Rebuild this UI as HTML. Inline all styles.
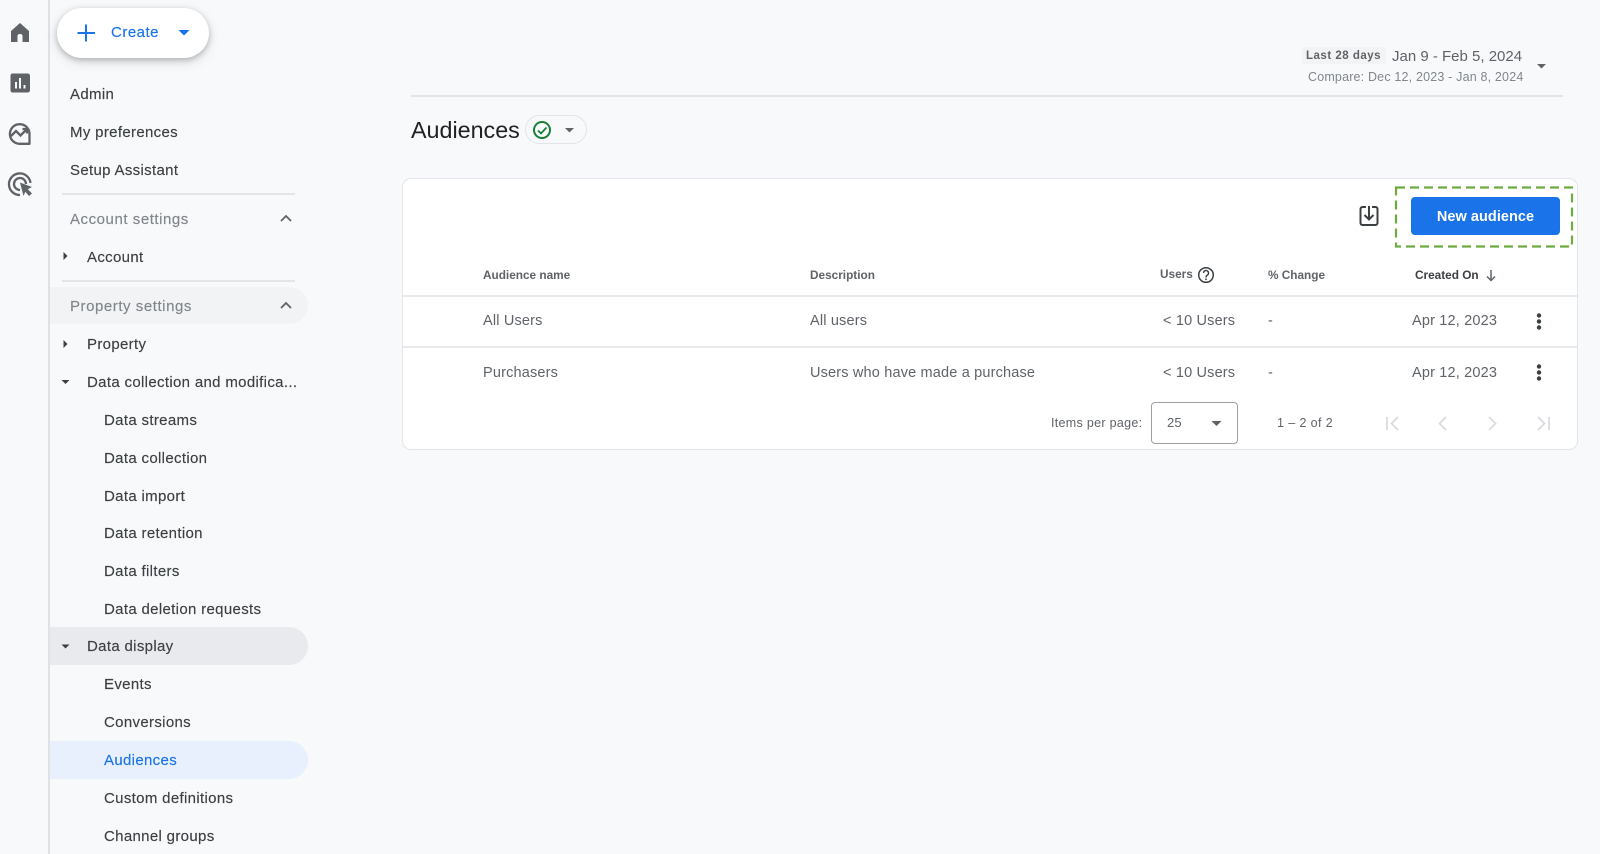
<!DOCTYPE html>
<html><head><meta charset="utf-8"><title>Audiences</title>
<style>
html,body{margin:0;padding:0;width:1600px;height:854px;overflow:hidden;background:#f8f9fb;font-family:"Liberation Sans",sans-serif;color:#3c4043}
.t{position:absolute;white-space:nowrap;line-height:20px;height:20px;font-size:15px;letter-spacing:.33px;-webkit-text-stroke:.15px currentColor}
.b{position:absolute}
svg{position:absolute;overflow:visible}
.g{color:#80868b;letter-spacing:.55px}
.h{font-size:11.800px;font-weight:bold;color:#5f6368;letter-spacing:0;-webkit-text-stroke:0}
.r{font-size:14.500px;color:#5f6368;letter-spacing:.17px;-webkit-text-stroke:0}
</style></head><body>
<div class="b" style="left:48px;top:0;width:2px;height:854px;background:#dfe1e5"></div>

<!-- pills -->
<div class="b" style="left:50px;top:287px;width:258px;height:37px;background:#f1f3f4;border-radius:0 19px 19px 0"></div>
<div class="b" style="left:50px;top:627px;width:258px;height:38px;background:#e8eaed;border-radius:0 19px 19px 0"></div>
<div class="b" style="left:50px;top:741px;width:258px;height:38px;background:#e8f0fe;border-radius:0 19px 19px 0"></div>
<div class="b" style="left:62px;top:193px;width:233px;height:2px;background:#e3e5e8"></div>
<div class="b" style="left:62px;top:280px;width:233px;height:2px;background:#e3e5e8"></div>

<!-- rail icons -->
<svg style="left:0;top:0" width="50" height="210" fill="#5f6368">
<path d="M20 23 L11 31 V42 H17.500 V36 Q17.500 34 20 34 Q22.500 34 22.500 36 V42 H29 V31 Z"/>
<path fill-rule="evenodd" d="M12.500 73.500 H27.500 Q30 73.500 30 76 V90 Q30 92.500 27.500 92.500 H12.500 Q10.500 92.500 10.500 90 V76 Q10.500 73.500 12.500 73.500 Z M15 82 V88.500 H17 V82 Z M19 78 V88.500 H21 V78 Z M23.500 85 V88.500 H25.500 V85 Z"/>
<g fill="none" stroke="#5f6368" stroke-width="2.300">
<path d="M29.500 141.500 V134 A9.800 9.800 0 1 0 19.700 143.800 H29.500 Z" stroke-linejoin="round"/>
<path d="M11 136 L16 131 L20.500 135.500 L26.500 129.500"/>
<path d="M22.500 129 H27 V133.500"/>
</g>
<g fill="none" stroke="#5f6368" stroke-width="2.300">
<path d="M20 195 A10.800 10.800 0 1 1 30.500 183"/>
<path d="M20 190 A6 6 0 1 1 26 184"/>
</g>
<path d="M20 182.500 L32 187 L27.800 189.300 L32 193.500 L29 196 L25.300 191.800 L23.500 196 Z"/>
</svg>

<!-- create button -->
<div class="b" style="left:57px;top:8px;width:152px;height:50px;background:#fff;border-radius:25px;box-shadow:0 2px 6px rgba(60,64,67,.3),0 4px 12px rgba(60,64,67,.15)"></div>
<svg style="left:0;top:0" width="210" height="60">
<path d="M86 24.500 V41.500 M77.500 33 H95" stroke="#1a73e8" stroke-width="2" fill="none"/>
<path d="M178.500 30 H189.500 L184 35.500 Z" fill="#1a73e8"/>
</svg>
<div class="t" style="left:111px;top:23px;color:#1a73e8;font-size:15px;letter-spacing:.5px">Create</div>

<!-- nav -->
<div class="t" style="left:70px;top:84.500px">Admin</div>
<div class="t" style="left:70px;top:122.500px">My preferences</div>
<div class="t" style="left:70px;top:160.500px">Setup Assistant</div>
<div class="t g" style="left:70px;top:209.500px">Account settings</div>
<div class="t" style="left:87px;top:247.500px">Account</div>
<div class="t g" style="left:70px;top:296.500px">Property settings</div>
<div class="t" style="left:87px;top:334.500px">Property</div>
<div class="t" style="left:87px;top:372.500px">Data collection and modifica...</div>
<div class="t" style="left:104px;top:410.500px">Data streams</div>
<div class="t" style="left:104px;top:448.500px">Data collection</div>
<div class="t" style="left:104px;top:486.500px">Data import</div>
<div class="t" style="left:104px;top:523.500px">Data retention</div>
<div class="t" style="left:104px;top:561.500px">Data filters</div>
<div class="t" style="left:104px;top:599.500px">Data deletion requests</div>
<div class="t" style="left:87px;top:637px">Data display</div>
<div class="t" style="left:104px;top:675px">Events</div>
<div class="t" style="left:104px;top:713px">Conversions</div>
<div class="t" style="left:104px;top:751px;color:#1a73e8">Audiences</div>
<div class="t" style="left:104px;top:789px">Custom definitions</div>
<div class="t" style="left:104px;top:826.500px">Channel groups</div>

<svg style="left:0;top:0" width="320" height="854" fill="#3c4043">
<path d="M63.500 252 L67.500 256 L63.500 260 Z"/>
<path d="M63.500 340 L67.500 344 L63.500 348 Z"/>
<path d="M61.500 380 H69.500 L65.500 384 Z"/>
<path d="M61.500 644.500 H69.500 L65.500 648.500 Z"/>
<g fill="none" stroke="#5f6368" stroke-width="1.800">
<path d="M281 221 L286 216 L291 221"/>
<path d="M281 308 L286 303 L291 308"/>
</g>
</svg>

<!-- date area -->
<div class="b" style="left:1302px;top:47px;width:84px;height:17px;background:#f1f3f4"></div>
<div class="t" style="left:1306px;top:46px;font-size:11.500px;font-weight:bold;letter-spacing:.5px;color:#5f6368;-webkit-text-stroke:0">Last 28 days</div>
<div class="t" style="left:1392px;top:46.500px;font-size:15px;letter-spacing:0;color:#5f6368;-webkit-text-stroke:0">Jan 9 - Feb 5, 2024</div>
<div class="t" style="left:1308px;top:67px;font-size:12.500px;letter-spacing:.18px;color:#80868b;-webkit-text-stroke:0">Compare: Dec 12, 2023 - Jan 8, 2024</div>
<svg style="left:0;top:0" width="1600" height="200">
<path d="M1537 64 H1546 L1541.500 68.500 Z" fill="#5f6368"/>
</svg>
<div class="b" style="left:411px;top:95px;width:1152px;height:2px;background:#e3e5e8"></div>

<!-- title -->
<div class="t" style="left:411px;top:115px;height:30px;line-height:30px;font-size:23.300px;letter-spacing:0;color:#202124;-webkit-text-stroke:0">Audiences</div>
<div class="b" style="left:525px;top:115px;width:60px;height:27px;border:1.500px solid #e3e5e8;border-radius:15px"></div>
<svg style="left:0;top:0" width="700" height="200">
<circle cx="542" cy="130" r="8" fill="none" stroke="#188038" stroke-width="2"/>
<path d="M538 130.500 L541 133.500 L546.500 127.500" fill="none" stroke="#188038" stroke-width="1.800"/>
<path d="M565 128 H574 L569.500 132.500 Z" fill="#5f6368"/>
</svg>

<!-- card -->
<div class="b" style="left:402px;top:178px;width:1174px;height:269.500px;background:#fff;border:1.500px solid #e3e5e8;border-radius:9px"></div>
<div class="b" style="left:403px;top:295px;width:1174px;height:2px;background:#e8eaed"></div>
<div class="b" style="left:403px;top:346px;width:1174px;height:2px;background:#e8eaed"></div>
<div class="b" style="left:1151px;top:402px;width:85px;height:40px;border:1.500px solid #9aa0a6;border-radius:4px;background:#fff"></div>

<svg style="left:0;top:0" width="1600" height="460">
<rect x="1396" y="187.500" width="176" height="59" fill="none" stroke="#6cab3f" stroke-width="2.200" stroke-dasharray="9 5"/>
<rect x="1360.500" y="207" width="17" height="18" rx="2" fill="none" stroke="#3c4043" stroke-width="2"/>
<path d="M1366 207 H1372" stroke="#fff" stroke-width="3"/>
<path d="M1369 206 V219 M1364.500 215 L1369 219.500 L1373.500 215" fill="none" stroke="#3c4043" stroke-width="2"/>
<circle cx="1206" cy="275" r="7.300" fill="none" stroke="#3c4043" stroke-width="1.500"/>
<path d="M1203.500 273 A2.500 2.500 0 1 1 1207.500 275 Q1206 276 1206 277.500" fill="none" stroke="#3c4043" stroke-width="1.400"/>
<circle cx="1206" cy="279.300" r=".9" fill="#3c4043"/>
<path d="M1491 270 V280.500 M1487 276.500 L1491 280.500 L1495 276.500" fill="none" stroke="#5f6368" stroke-width="1.500"/>
<g fill="#3c4043">
<circle cx="1539" cy="315.500" r="2.200"/><circle cx="1539" cy="321.500" r="2.200"/><circle cx="1539" cy="327.500" r="2.200"/>
<circle cx="1539" cy="366.500" r="2.200"/><circle cx="1539" cy="372.500" r="2.200"/><circle cx="1539" cy="378.500" r="2.200"/>
</g>
<path d="M1211.500 421 H1221.500 L1216.500 426 Z" fill="#5f6368"/>
<g fill="none" stroke="#dadce0" stroke-width="1.800">
<path d="M1387 417 V430 M1398 417 L1391.500 423.500 L1398 430"/>
<path d="M1446 417 L1439.500 423.500 L1446 430"/>
<path d="M1489 417 L1495.500 423.500 L1489 430"/>
<path d="M1538 417 L1544.500 423.500 L1538 430 M1549 417 V430"/>
</g>
</svg>

<div class="b" style="left:1411px;top:197px;width:149px;height:38px;background:#1a73e8;border-radius:4px"></div>
<div class="t" style="left:1411px;top:207px;width:149px;text-align:center;color:#fff;font-weight:bold;font-size:14.500px;letter-spacing:.05px;-webkit-text-stroke:0">New audience</div>

<div class="t h" style="left:483px;top:265px">Audience name</div>
<div class="t h" style="left:810px;top:265px">Description</div>
<div class="t h" style="left:1160px;top:264px">Users</div>
<div class="t h" style="left:1268px;top:265px">% Change</div>
<div class="t h" style="left:1415px;top:265px;color:#3c4043">Created On</div>

<div class="t r" style="left:483px;top:311px">All Users</div>
<div class="t r" style="left:810px;top:311px">All users</div>
<div class="t r" style="left:1163px;top:311px">&lt; 10 Users</div>
<div class="t r" style="left:1268px;top:311px">-</div>
<div class="t r" style="left:1412px;top:311px">Apr 12, 2023</div>

<div class="t r" style="left:483px;top:362.500px">Purchasers</div>
<div class="t r" style="left:810px;top:362.500px">Users who have made a purchase</div>
<div class="t r" style="left:1163px;top:362.500px">&lt; 10 Users</div>
<div class="t r" style="left:1268px;top:362.500px">-</div>
<div class="t r" style="left:1412px;top:362.500px">Apr 12, 2023</div>

<div class="t" style="left:1051px;top:413px;font-size:12.500px;letter-spacing:.3px;color:#5f6368;-webkit-text-stroke:0">Items per page:</div>
<div class="t" style="left:1167px;top:413px;font-size:13px;letter-spacing:.2px;color:#5f6368;-webkit-text-stroke:0">25</div>
<div class="t" style="left:1277px;top:413px;font-size:12.500px;letter-spacing:.4px;color:#5f6368;-webkit-text-stroke:0">1 – 2 of 2</div>
</body></html>
